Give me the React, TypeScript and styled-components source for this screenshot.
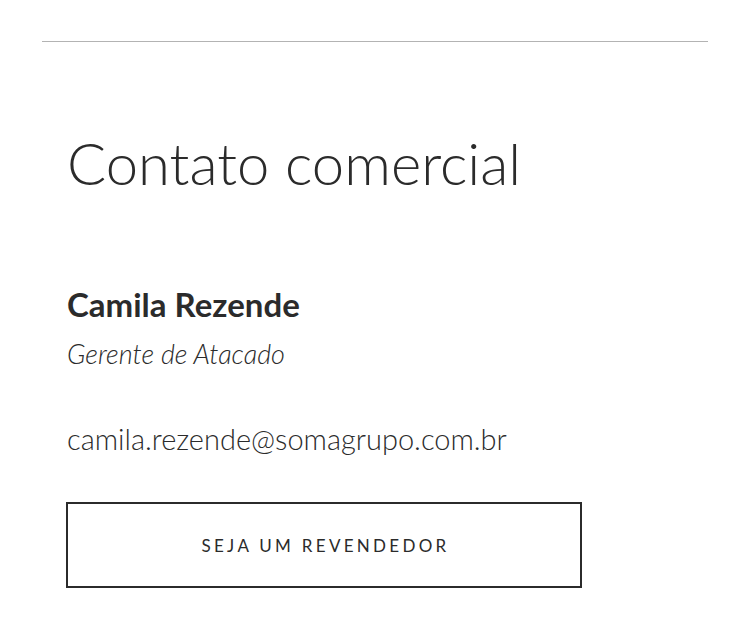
import React from 'react';
import styled, { createGlobalStyle, css } from 'styled-components';

const GlobalStyle = createGlobalStyle`
  body {
    margin: 0;
    background: #ffffff;
    font-family: Lato, "Liberation Sans", sans-serif;
    color: #2b2b2b;
  }
`;

const Page = styled.div`
  padding: 41px 42px 0;
`;

const Divider = styled.hr`
  margin: 0;
  border: none;
  border-top: 1px solid #b3b3b3;
`;

const Section = styled.section`
  padding: 0 24px;
  display: flex;
  flex-direction: column;
  align-items: flex-start;
`;

const textIndent = css`
  padding-left: 1px;
`;

const Title = styled.h2`
  ${textIndent}
  margin: 88px 0 0;
  font-size: 58px;
  font-weight: 300;
  line-height: 66px;
  color: #2b2b2b;
`;

const Name = styled.h3`
  ${textIndent}
  margin: 88px 0 0;
  font-size: 33px;
  font-weight: 700;
  line-height: 40px;
`;

const Role = styled.p`
  ${textIndent}
  margin: 13px 0 0;
  font-size: 27px;
  font-style: italic;
  font-weight: 300;
  line-height: 34px;
`;

const Email = styled.p`
  ${textIndent}
  margin: 51px 0 0;
  font-size: 29px;
  font-weight: 300;
  line-height: 34px;
`;

const Button = styled.a`
  margin-top: 46px;
  box-sizing: border-box;
  width: 516px;
  height: 86px;
  display: flex;
  align-items: center;
  justify-content: center;
  padding-left: 3px;
  border: 2px solid #2b2b2b;
  font-size: 17px;
  font-weight: 400;
  letter-spacing: 3.3px;
  text-transform: uppercase;
  color: #2b2b2b;
  text-decoration: none;
`;

export default function App() {
  return (
    <Page>
      <GlobalStyle />
      <Divider />
      <Section>
        <Title>Contato comercial</Title>
        <Name>Camila Rezende</Name>
        <Role>Gerente de Atacado</Role>
        <Email>camila.rezende@somagrupo.com.br</Email>
        <Button href="#">Seja um revendedor</Button>
      </Section>
    </Page>
  );
}
